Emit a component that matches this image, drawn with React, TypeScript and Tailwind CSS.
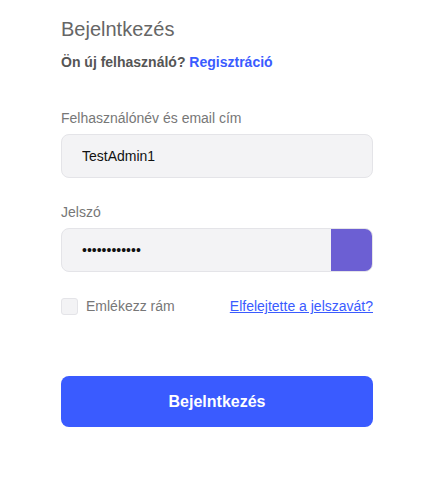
import { useState } from "react";

export default function App() {
  const [username, setUsername] = useState("TestAdmin1");
  const [password, setPassword] = useState("TestAdmin123");
  const [remember, setRemember] = useState(false);

  return (
    <div className="min-h-[499px] bg-white font-['Liberation_Sans',Arial,sans-serif]">
      <div className="ml-[61px] w-[312px] pt-[17px]">
        <h1 className="text-[20px] leading-[24px] text-[#666]">Bejelntkezés</h1>
        <p className="mt-[11px] text-[14px] leading-[20px] font-bold text-[#555]">
          Ön új felhasználó?{" "}
          <a href="#" className="text-[#3a5bff]">
            Regisztráció
          </a>
        </p>

        <label className="mt-[38px] block text-[14px] leading-[16px] text-[#777]">
          Felhasználónév és email cím
        </label>
        <input
          value={username}
          onChange={(e) => setUsername(e.target.value)}
          className="mt-[8px] block h-[44px] w-full rounded-[8px] border border-[#e4e4e8] bg-[#f3f3f5] px-[20px] text-[14px] text-[#111] outline-none"
        />

        <label className="mt-[26px] block text-[14px] leading-[16px] text-[#777]">
          Jelszó
        </label>
        <div className="mt-[8px] flex h-[44px] w-full overflow-hidden rounded-[8px] border border-[#e4e4e8] bg-[#f3f3f5]">
          <input
            type="password"
            value={password}
            onChange={(e) => setPassword(e.target.value)}
            className="min-w-0 flex-1 bg-transparent px-[20px] text-[14px] text-[#111] outline-none"
          />
          <button className="-my-px -mr-px w-[42px] bg-[#6c5fd3]" aria-label="Jelszó megjelenítése" />
        </div>

        <div className="mt-[24px] flex items-center justify-between">
          <label className="flex items-center gap-[8px] text-[14px] text-[#777]">
            <input
              type="checkbox"
              checked={remember}
              onChange={(e) => setRemember(e.target.checked)}
              className="h-[17px] w-[17px] appearance-none rounded-[3px] border border-[#e4e4e8] bg-[#f3f3f5]"
            />
            Emlékezz rám
          </label>
          <a href="#" className="text-[14px] text-[#3a5bff] underline">
            Elfelejtette a jelszavát?
          </a>
        </div>

        <button className="mt-[59px] flex h-[51px] w-full items-center justify-center rounded-[8px] bg-[#3a5bff] text-[16px] font-bold text-white">
          Bejelntkezés
        </button>
      </div>
    </div>
  );
}
